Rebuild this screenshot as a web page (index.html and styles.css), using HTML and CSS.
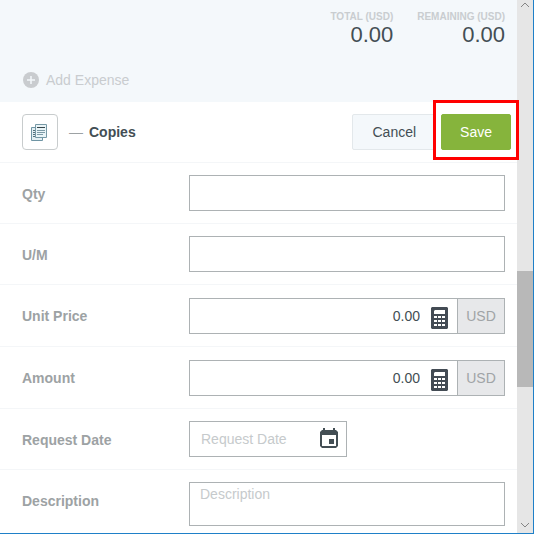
FILE: index.html
```html
<!DOCTYPE html>
<html lang="en">
<head>
<meta charset="utf-8">
<meta name="viewport" content="width=device-width, initial-scale=1">
<title>Expenses</title>
<link rel="stylesheet" href="styles.css">
</head>
<body>
<svg width="0" height="0" class="sprite" aria-hidden="true">
  <symbol id="calculator" viewBox="0 0 17 22">
    <path fill="#434b54" fill-rule="evenodd" d="M1 0h15l1 1v20l-1 1H1l-1-1V1zM3 4v3h11V3H4zM3 9v2h3v-2zM7 9v2h3v-2zM11 9v2h3v-2zM3 13v2h3v-2zM7 13v2h3v-2zM11 13v2h3v-2zM3 17v2h3v-2zM7 17v2h3v-2zM11 17v2h3v-2z"/>
  </symbol>
</svg>
<div class="window">
  <main class="pane">
    <section class="summary">
      <dl class="totals">
        <div class="total"><dt>TOTAL (USD)</dt><dd>0.00</dd></div>
        <div class="total"><dt>REMAINING (USD)</dt><dd>0.00</dd></div>
      </dl>
      <button class="add" type="button">
        <svg width="16" height="16" viewBox="0 0 16 16" aria-hidden="true"><circle cx="8" cy="8" r="8" fill="#c9cccf"/><path d="M8 4v8M4 8h8" stroke="#f4f8fb" stroke-width="1.5"/></svg>
        Add Expense
      </button>
    </section>
    <form>
      <header class="expense">
        <span class="type">
          <svg width="18" height="17" viewBox="0 0 18 17" aria-hidden="true">
            <path d="M.5 3.5h11v13H.5z" fill="#e3eff3" stroke="#6f95a4"/>
            <path d="M2 6.500h2M2 8.500h2M2 10.500h2M2 12.500h2" stroke="#55707c"/>
            <path d="M4.500 .5h11v13h-11z" fill="#e9f4f7" stroke="#7799a6"/>
            <path d="M6 3.500h8" stroke="#36454b"/>
            <path d="M6 6.500h8M6 8.500h8M6 10.500h6" stroke="#7d9ba7"/>
          </svg>
        </span>
        <h1><span class="dash">—</span>Copies</h1>
        <div class="actions">
          <button class="button" type="button">Cancel</button>
          <span class="highlight"><button class="button primary" type="submit">Save</button></span>
        </div>
      </header>
      <div class="row">
        <label for="qty">Qty</label>
        <input class="field" id="qty" type="text">
      </div>
      <div class="row">
        <label for="um">U/M</label>
        <input class="field" id="um" type="text">
      </div>
      <div class="row">
        <label for="price">Unit Price</label>
        <div class="field money">
          <input id="price" type="text" value="0.00">
          <button class="tool" type="button" aria-label="Calculator"><svg width="17" height="22"><use href="#calculator"/></svg></button>
          <span class="unit">USD</span>
        </div>
      </div>
      <div class="row">
        <label for="amount">Amount</label>
        <div class="field money">
          <input id="amount" type="text" value="0.00">
          <button class="tool" type="button" aria-label="Calculator"><svg width="17" height="22"><use href="#calculator"/></svg></button>
          <span class="unit">USD</span>
        </div>
      </div>
      <div class="row">
        <label for="date">Request Date</label>
        <div class="field date">
          <input id="date" type="text" placeholder="Request Date">
          <button class="tool" type="button" aria-label="Calendar"><svg width="18" height="20" viewBox="0 0 18 20"><path fill="#434e54" fill-rule="evenodd" d="M3 0h2v2h8V0h2v2h1l2 2v14l-2 2H2l-2-2V4l2-2h1zM2 7v11h14V7zM9 11h5v5H9z"/></svg></button>
        </div>
      </div>
      <div class="row last">
        <label for="description">Description</label>
        <textarea class="field" id="description" placeholder="Description"></textarea>
      </div>
    </form>
  </main>
  <div class="scrollbar" aria-hidden="true">
    <svg width="16" height="16"><path d="M4 7l4-4 4 4" fill="none" stroke="#858585"/></svg>
    <div class="track"><div class="before"></div><div class="thumb"></div><div class="after"></div></div>
    <svg width="16" height="16"><path d="M4 6l4 4 4-4" fill="none" stroke="#858585"/></svg>
  </div>
</div>
</body>
</html>
```
FILE: styles.css
```css
* { box-sizing: border-box; }

body {
  margin: 0;
  background: #fff;
  color: #434e54;
  font: 14px/20px "Liberation Sans", Arial, sans-serif;
}

button, input, textarea {
  margin: 0;
  padding: 0;
  border: 0;
  border-radius: 0;
  background: none;
  color: inherit;
  font: inherit;
}

svg { display: block; }
.sprite { position: absolute; }

.window {
  display: flex;
  min-height: 100vh;
  border-right: 1px solid #1f80c8;
  border-bottom: 1px solid #1f80c8;
}

.pane { flex: 1; min-width: 0; }

.summary {
  padding: 11px 12px 12px 22px;
  background: #f4f8fb;
}

.totals {
  display: flex;
  justify-content: flex-end;
  gap: 24px;
  margin: 0 0 23px;
}

.total { text-align: right; }

.total dt {
  color: #c9cdd0;
  font-size: 10px;
  font-weight: bold;
  line-height: 12px;
}

.total dd {
  margin: 0;
  font-size: 22px;
  line-height: 24px;
}

.add {
  display: flex;
  align-items: center;
  gap: 7px;
  padding-left: 1px;
  color: #c9cccf;
}

.expense {
  display: flex;
  align-items: center;
  padding: 12px 6px 12px 22px;
}

.type {
  display: grid;
  place-items: center;
  width: 36px;
  height: 36px;
  border: 1px solid #c8cccd;
  border-radius: 4px;
}

h1 {
  display: flex;
  gap: 6px;
  margin: 0 auto 0 11px;
  font-size: 14px;
}

.dash { color: #9da2a4; font-weight: normal; }

.actions { display: flex; gap: 5px; }

.button {
  display: block;
  height: 36px;
  padding: 0 19px;
  border: 1px solid #e3e8eb;
  border-radius: 2px;
  background: #f4f8fb;
}

.primary {
  padding: 0 18px;
  border-color: #86b43c;
  background: #86b43c;
  color: #fff;
}

.highlight { position: relative; }

.highlight::after {
  content: "";
  position: absolute;
  inset: -14px -8px -10px;
  border: 3px solid #f00;
  pointer-events: none;
}

.row {
  display: grid;
  grid-template-columns: 167px 1fr;
  align-items: start;
  padding: 12px 12px 12px 22px;
  border-top: 1px solid #f4f6f8;
}

.row label {
  height: 36px;
  color: #9da2a4;
  font-weight: bold;
  line-height: 38px;
}

.field {
  width: 100%;
  height: 36px;
  border: 1px solid #adb2b4;
  background: #fff;
}

input.field { padding: 0 11px; }

.money, .date { display: flex; align-items: stretch; }
.money { margin-top: 1px; }

.money input, .date input { flex: 1; width: 0; min-width: 0; }
.money input { text-align: right; }
.date { width: 158px; }
.date input { padding-left: 11px; }

.tool { padding: 0 8px 2px 11px; }
.money .tool { padding: 4px 9px 0 11px; }

.unit {
  width: 47px;
  border-left: 1px solid #adb2b4;
  background: #e7e8ea;
  color: #a0a4a6;
  line-height: 34px;
  text-align: center;
}

textarea.field {
  display: block;
  height: 44px;
  padding: 1px 10px;
  resize: none;
}

::placeholder { color: #c6cacc; opacity: 1; }

.last { padding-bottom: 7px; }

.scrollbar {
  display: flex;
  flex-direction: column;
  width: 16px;
  background: #e6e6e6;
}

.track { display: flex; flex: 1; flex-direction: column; }
.before { flex: 255; }
.thumb { flex: 116; background: #b8b8b8; }
.after { flex: 130; }
```
